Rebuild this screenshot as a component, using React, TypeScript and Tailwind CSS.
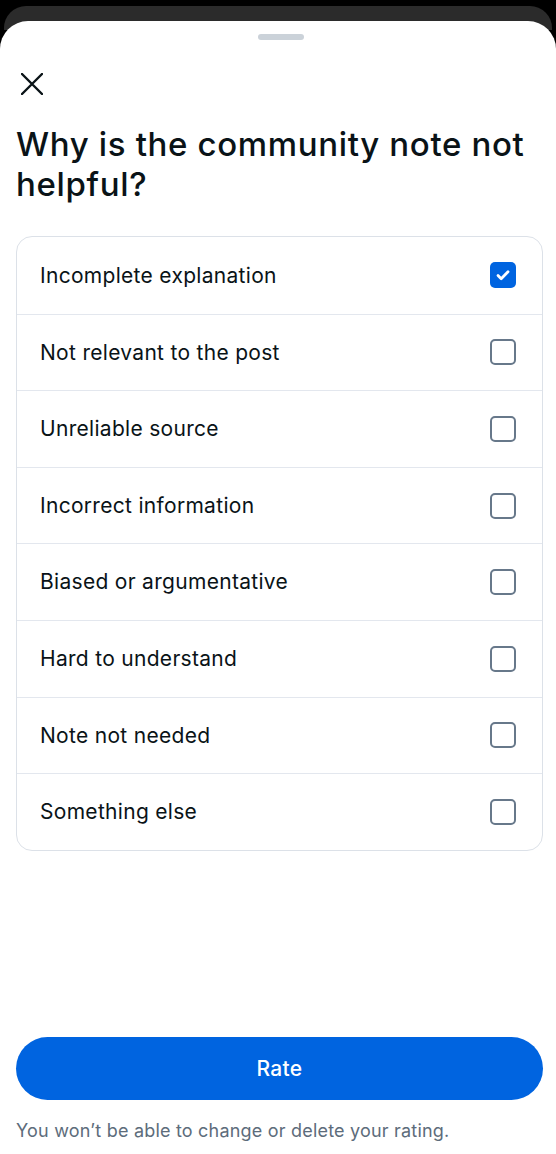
import { useState } from "react";

const reasons = [
  "Incomplete explanation",
  "Not relevant to the post",
  "Unreliable source",
  "Incorrect information",
  "Biased or argumentative",
  "Hard to understand",
  "Note not needed",
  "Something else",
];

function Checkbox({ checked }: { checked: boolean }) {
  if (checked) {
    return (
      <div className="w-[26px] h-[26px] rounded-[5px] bg-[#0064e0] flex items-center justify-center">
        <svg width="18" height="18" viewBox="0 0 18 18" fill="none">
          <path
            d="M4 9.5l3.2 3.2L14 5.8"
            stroke="white"
            strokeWidth="2.8"
            strokeLinecap="round"
            strokeLinejoin="round"
          />
        </svg>
      </div>
    );
  }
  return <div className="w-[26px] h-[26px] rounded-[5px] border-[2.5px] border-[#67788a]" />;
}

export default function App() {
  const [selected, setSelected] = useState<string[]>(["Incomplete explanation"]);

  const toggle = (r: string) =>
    setSelected((s) => (s.includes(r) ? s.filter((x) => x !== r) : [...s, r]));

  return (
    <div
      className="w-[556px] h-[1154px] bg-black flex flex-col overflow-hidden"
      style={{ fontFamily: "Inter, 'Noto Sans', sans-serif" }}
    >
      <div className="mt-[6px] mx-[4px] h-[24px] rounded-t-[22px] bg-[#2b2b2b] shrink-0" />
      {/* sheet */}
      <div className="-mt-[9px] flex-1 bg-white rounded-t-[28px] flex flex-col pl-4 pr-[13px]">
        <div className="flex justify-center pt-[13px] pl-[3px]">
          <div className="w-[46px] h-[6px] rounded-full bg-[#cbd2d9]" />
        </div>

        <button className="mt-[33px] ml-[5px] w-[22px] h-[22px]">
          <svg width="22" height="22" viewBox="0 0 22 22" fill="none">
            <path d="M1 1l20 20M21 1L1 21" stroke="#0a1317" strokeWidth="2.4" strokeLinecap="round" />
          </svg>
        </button>

        <h1 className="mt-[29px] text-[33px] leading-[40px] font-medium text-[#0a1317] tracking-[0.65px]">
          Why is the community note not helpful?
        </h1>

        <div className="mt-[32px] border border-[#dce1e8] rounded-[16px] flex flex-col">
          {reasons.map((r, i) => (
            <div
              key={r}
              onClick={() => toggle(r)}
              className={
                "h-[76.6px] flex items-center justify-between pl-[23px] pr-[26px] cursor-pointer " +
                (i > 0 ? "border-t border-[#e3e7ee]" : "")
              }
            >
              <span className="text-[21px] tracking-[0.3px] text-[#0a1317]">{r}</span>
              <Checkbox checked={selected.includes(r)} />
            </div>
          ))}
        </div>

        <div className="flex-1" />

        <button className="h-[63px] w-full rounded-full bg-[#0064e0] text-white text-[21px] font-medium tracking-[0.3px]">
          Rate
        </button>
        <p className="mt-[17px] mb-[10px] text-[18px] tracking-[0.2px] text-[#5d6c7b]">
          You won’t be able to change or delete your rating.
        </p>
      </div>
    </div>
  );
}
